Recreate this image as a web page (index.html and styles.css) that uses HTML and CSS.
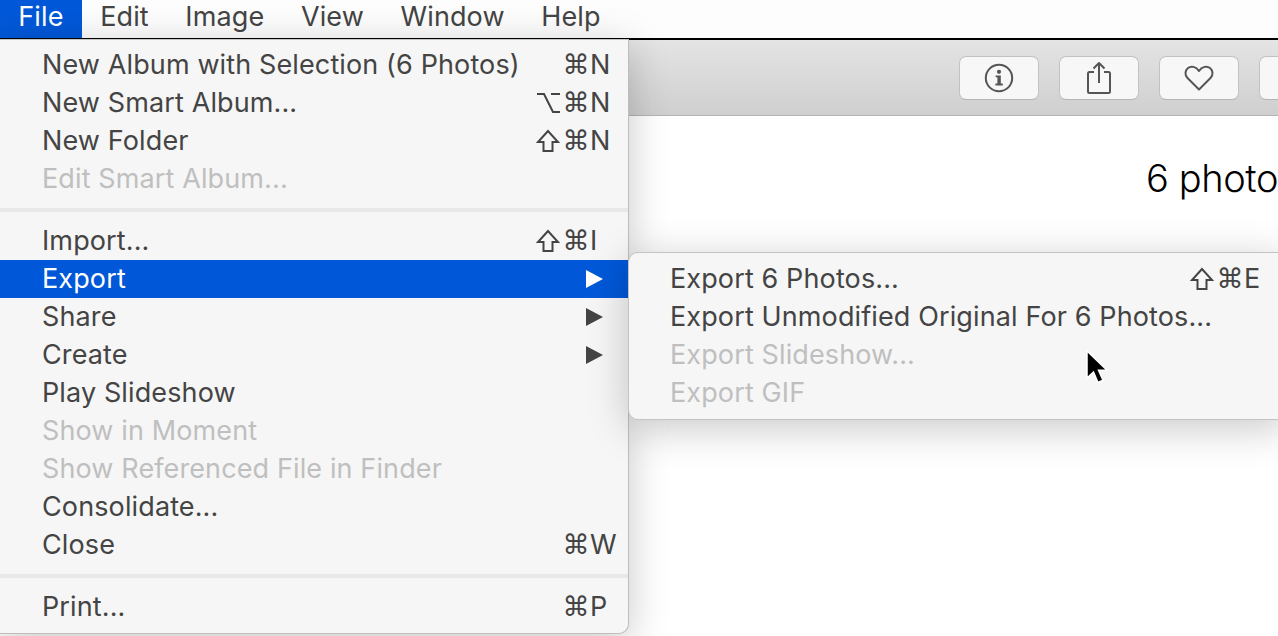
FILE: index.html
```html
<!DOCTYPE html>
<html lang="en">
<head>
<meta charset="utf-8">
<title>Photos File menu</title>
<link rel="stylesheet" href="styles.css">
</head>
<body>
<nav class="menubar">
  <span class="bar-item active">File</span>
  <span class="bar-item">Edit</span>
  <span class="bar-item">Image</span>
  <span class="bar-item">View</span>
  <span class="bar-item">Window</span>
  <span class="bar-item">Help</span>
</nav>
<main class="window">
  <header class="toolbar">
    <button class="tool">
      <svg width="30" height="30" viewBox="0 0 30 30"><circle class="ic" cx="15" cy="15" r="13.2"/><circle class="if" cx="15" cy="8.8" r="2.1"/><path class="if" d="M11.6 12.4h5.2v8.2h2v1.9h-7.4v-1.9h2v-6.3h-1.8z"/></svg>
    </button>
    <button class="tool">
      <svg width="30" height="34" viewBox="0 0 30 34"><path class="ic" d="M10 11H5.500a1.500 1.500 0 0 0-1.500 1.500v18a1.500 1.500 0 0 0 1.500 1.500h19a1.500 1.500 0 0 0 1.500-1.500v-18a1.500 1.500 0 0 0-1.500-1.500H20M15 22V2M9.500 7.500 15 2l5.500 5.500"/></svg>
    </button>
    <button class="tool">
      <svg width="30" height="26" viewBox="0 0 30 26"><path class="ic" d="M15 24.500 3.500 13C.5 10 1 5.500 4 3c3-2.300 8-1.700 11 3 3-4.700 8-5.300 11-3 3 2.500 3.500 7 .5 10z"/></svg>
    </button>
    <button class="tool"></button>
  </header>
  <h1 class="title">6 photos</h1>
</main>

<section class="menu file-menu">
  <div class="row"><span>New Album with Selection (6 Photos)</span><span class="keys"><i></i><i>⌘</i>N</span></div>
  <div class="row"><span>New Smart Album...</span><span class="keys"><i><svg class="mod" width="24" height="22" viewBox="0 0 24 22"><path d="M1 2h7l9 18h7M15 2h9"/></svg></i><i>⌘</i>N</span></div>
  <div class="row"><span>New Folder</span><span class="keys"><i><svg class="mod" width="24" height="24" viewBox="0 0 24 24"><path d="M12 2 2 13h5.500v9h9v-9H22z"/></svg></i><i>⌘</i>N</span></div>
  <div class="row off"><span>Edit Smart Album...</span></div>
  <hr class="sep">
  <div class="row"><span>Import...</span><span class="keys"><i><svg class="mod" width="24" height="24" viewBox="0 0 24 24"><path d="M12 2 2 13h5.500v9h9v-9H22z"/></svg></i><i>⌘</i>I</span></div>
  <div class="row on"><span>Export</span><b class="arrow"></b></div>
  <div class="row"><span>Share</span><b class="arrow"></b></div>
  <div class="row"><span>Create</span><b class="arrow"></b></div>
  <div class="row"><span>Play Slideshow</span></div>
  <div class="row off"><span>Show in Moment</span></div>
  <div class="row off"><span>Show Referenced File in Finder</span></div>
  <div class="row"><span>Consolidate...</span></div>
  <div class="row"><span>Close</span><span class="keys"><i></i><i>⌘</i>W</span></div>
  <hr class="sep">
  <div class="row"><span>Print...</span><span class="keys"><i></i><i>⌘</i>P</span></div>
</section>

<section class="menu sub-menu">
  <div class="row"><span>Export 6 Photos...</span><span class="keys"><i><svg class="mod" width="24" height="24" viewBox="0 0 24 24"><path d="M12 2 2 13h5.500v9h9v-9H22z"/></svg></i><i>⌘</i>E</span></div>
  <div class="row"><span>Export Unmodified Original For 6 Photos...</span></div>
  <div class="row off"><span>Export Slideshow...</span></div>
  <div class="row off"><span>Export GIF</span></div>
</section>

<svg class="cursor" width="24" height="36" viewBox="0 0 24 36"><path d="M2 1v27l6.500-6 4.500 10.500 5-2.200-4.500-10H22z" fill="#000" stroke="#fff" stroke-width="1.500"/></svg>
</body>
</html>
```
FILE: styles.css
```css
* { box-sizing: border-box; }
html, body { margin: 0; height: 636px; overflow: hidden; background: #fff; }
body {
  position: relative;
  width: 1278px;
  font-family: Inter, "Liberation Sans", sans-serif;
  font-size: 27px;
  letter-spacing: 0.12px;
  color: #444;
}
.menubar {
  display: flex;
  height: 38px;
  background: #fdfdfd;
  line-height: 34px;
}
.bar-item { padding: 0 18.300px; }
.bar-item.active { background: #0058d8; color: #fff; }
.window { border-top: 2px solid #000; }
.toolbar {
  display: flex;
  gap: 20px;
  height: 76px;
  padding: 16px 0 0 959px;
  overflow: hidden;
  background: linear-gradient(#e4e4e4, #cfcfcf);
  border-bottom: 1px solid #b4b4b4;
}
.tool {
  display: flex;
  flex: 0 0 80px;
  align-items: center;
  justify-content: center;
  height: 44px;
  padding: 0;
  background: #f7f7f7;
  border: 1px solid #c2c2c2;
  border-bottom-color: #b4b4b4;
  border-radius: 7px;
}
.ic { fill: none; stroke: #555; stroke-width: 2; stroke-linejoin: round; }
.if { fill: #555; }
.title {
  margin: 0;
  padding: 35px 0 0 1146px;
  font-size: 38px;
  font-weight: 300;
  line-height: 54px;
  letter-spacing: -0.4px;
  white-space: nowrap;
  color: #000;
}
.menu {
  position: absolute;
  background: #f6f6f6;
  box-shadow: 0 8px 40px rgba(0, 0, 0, 0.22);
}
.file-menu {
  top: 39px;
  left: 0;
  width: 629px;
  height: 595px;
  padding-top: 6px;
  border-top: 1px solid #c4c4c4;
  border-right: 1px solid #bdbdbd;
  border-bottom: 1px solid #bdbdbd;
  border-bottom-right-radius: 10px;
}
.sub-menu {
  top: 252px;
  left: 628px;
  width: 660px;
  height: 168px;
  padding-top: 7px;
  border: 1px solid #c4c4c4;
  border-radius: 10px;
}
.row {
  display: flex;
  align-items: center;
  justify-content: space-between;
  height: 38px;
  padding: 0 0 1px 42px;
  white-space: nowrap;
}
.sub-menu .row { padding-left: 41px; }
.row.on { background: #0058d8; color: #fff; }
.row.off { color: #bfbfbf; }
.sep { height: 4px; margin: 10px 0; background: #e8e8e8; border: 0; }
.keys { display: flex; align-items: center; width: 94px; }
.sub-menu .keys { width: 99px; }
.keys i {
  display: flex;
  flex: 0 0 28px;
  align-items: center;
  justify-content: center;
  height: 24px;
  font-family: "DejaVu Sans", sans-serif;
  font-size: 27px;
  font-style: normal;
}
.mod { flex: none; fill: none; stroke: currentColor; stroke-width: 2; }
.arrow {
  width: 0;
  height: 0;
  margin-right: 25px;
  border-top: 9.5px solid transparent;
  border-bottom: 9.5px solid transparent;
  border-left: 17px solid currentColor;
}
.cursor { position: absolute; top: 350px; left: 1085px; }
```
